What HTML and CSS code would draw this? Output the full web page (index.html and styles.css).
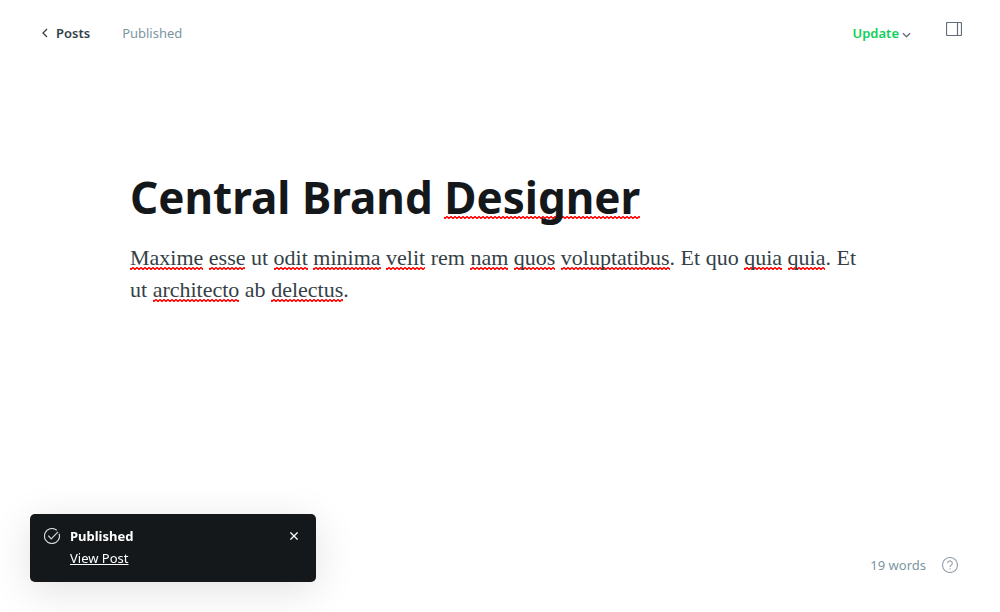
FILE: index.html
```html
<!DOCTYPE html>
<html lang="en">
<head>
<meta charset="utf-8">
<meta name="viewport" content="width=device-width, initial-scale=1">
<title>Central Brand Designer</title>
<link rel="stylesheet" href="styles.css">
</head>
<body>
<div class="editor">
  <header class="toolbar">
    <nav class="toolbar-group">
      <a class="back-link" href="#">
        <svg class="back-icon" viewBox="0 0 6 10" aria-hidden="true"><path d="M5 1 1 5l4 4"/></svg>
        <span>Posts</span>
      </a>
      <span class="status">Published</span>
    </nav>
    <div class="toolbar-group">
      <button class="update" type="button">
        <span>Update</span>
        <svg class="chevron" viewBox="0 0 10 6" aria-hidden="true"><path d="m1 1 4 4 4-4"/></svg>
      </button>
      <button class="icon-button settings" type="button" aria-label="Settings">
        <svg class="panel-icon" viewBox="0 0 16 14" aria-hidden="true"><rect x=".5" y=".5" width="15" height="13" rx="1"/><path d="M11.5 .5v13"/></svg>
      </button>
    </div>
  </header>
  <main class="canvas">
    <h1 class="title" contenteditable="true" spellcheck="false">Central Brand <span class="misspelt">Designer</span></h1>
    <p class="content" contenteditable="true" spellcheck="false"><span class="misspelt">Maxime</span> <span class="misspelt">esse</span> ut <span class="misspelt">odit</span> <span class="misspelt">minima</span> <span class="misspelt">velit</span> rem <span class="misspelt">nam</span> <span class="misspelt">quos</span> <span class="misspelt">voluptatibus</span>. Et quo <span class="misspelt">quia</span> <span class="misspelt">quia</span>. Et ut <span class="misspelt">architecto</span> ab <span class="misspelt">delectus</span>.</p>
  </main>
  <footer class="word-count">
    <span>19 words</span>
    <a class="help" href="#" aria-label="Help">
      <svg class="help-icon" viewBox="0 0 16 16" aria-hidden="true"><circle cx="8" cy="8" r="7.5"/><path d="M5.7 6.2a2.3 2.3 0 1 1 3.5 2c-.8.5-1.2.8-1.2 1.7"/><path d="M8 11.3v1.1"/></svg>
    </a>
  </footer>
</div>
<aside class="toast" role="status">
  <svg class="check-icon" viewBox="0 0 16 16" aria-hidden="true"><path d="M15.1 5.7a7.5 7.5 0 1 1-2.3-3.4"/><path d="m4.3 7.6 2.9 3.2 6.8-7"/></svg>
  <div class="toast-body">
    <strong class="toast-title">Published</strong>
    <a class="toast-link" href="#">View Post</a>
  </div>
  <button class="icon-button close" type="button" aria-label="Close">
    <svg class="close-icon" viewBox="0 0 8 8" aria-hidden="true"><path d="m.4.4 7.2 7.2M7.6.4.4 7.6"/></svg>
  </button>
</aside>
</body>
</html>
```
FILE: styles.css
```css
* {
  box-sizing: border-box;
}

body {
  margin: 0;
  background: #fff;
  color: #14181b;
  font-family: "Noto Sans", "Open Sans", sans-serif;
  font-size: 13px;
  line-height: 20px;
}

a {
  color: inherit;
  text-decoration: none;
}

button {
  padding: 0;
  border: 0;
  background: none;
  font: inherit;
  cursor: pointer;
}

svg {
  display: block;
  fill: none;
  stroke: currentColor;
}

.editor {
  display: flex;
  flex-direction: column;
  min-height: 100vh;
}

.toolbar {
  display: flex;
  justify-content: space-between;
  align-items: flex-start;
  padding: 20px 38px 0 42px;
}

.toolbar-group {
  display: flex;
  align-items: flex-start;
}

.back-link {
  display: flex;
  align-items: center;
  gap: 8px;
  margin-top: 3px;
  color: #343f47;
  font-weight: 600;
}

.back-icon {
  width: 6px;
  height: 10px;
  stroke-width: 1.3;
}

.status {
  margin: 3px 0 0 32px;
  color: #7c95a2;
}

.update {
  display: flex;
  align-items: center;
  gap: 3px;
  margin-top: 3px;
  color: #0bd05a;
  font-weight: 600;
}

.chevron {
  width: 9px;
  height: 6px;
  margin-top: 4px;
  color: #6b747c;
  stroke-width: 1.6;
}

.icon-button {
  display: flex;
}

.settings {
  margin: 2px 0 0 35px;
  color: #626d79;
}

.panel-icon {
  width: 16px;
  height: 14px;
  stroke-width: 1.2;
}

.canvas {
  flex: 1;
  width: 100%;
  max-width: 740px;
  margin: 0 auto;
  padding-top: 126px;
}

.title {
  margin: 0;
  font-size: 44px;
  font-weight: 700;
  line-height: 56px;
  outline: none;
}

.content {
  margin: 17px 0 0;
  color: #343f47;
  font-family: Georgia, "Liberation Serif", serif;
  font-size: 22px;
  line-height: 32px;
  outline: none;
}

.misspelt {
  background: url("data:image/svg+xml,%3Csvg xmlns='http://www.w3.org/2000/svg' width='4' height='3'%3E%3Cpath d='M-1 .5 1 2.5 3 .5 5 2.5' fill='none' stroke='%23f00' stroke-width='1.4'/%3E%3C/svg%3E") repeat-x left bottom;
}

.title .misspelt {
  background-position: left bottom 8px;
}

.word-count {
  display: flex;
  justify-content: flex-end;
  align-items: center;
  gap: 16px;
  padding: 0 42px 37px 0;
  color: #7c95a2;
}

.help-icon {
  width: 16px;
  height: 16px;
  color: #95a1ad;
  stroke-width: 1.1;
}

.toast {
  position: fixed;
  bottom: 30px;
  left: 30px;
  display: flex;
  align-items: flex-start;
  width: 286px;
  padding: 11px 18px 13px 14px;
  border-radius: 5px;
  background: #14181b;
  box-shadow: 0 0 1px rgba(0, 0, 0, .05), 0 8px 40px rgba(0, 0, 0, .12);
  color: #fff;
}

.check-icon {
  width: 16px;
  height: 16px;
  margin: 3px 10px 0 0;
  color: #d5d8da;
  stroke-width: 1.2;
}

.toast-body {
  display: flex;
  flex: 1;
  flex-direction: column;
  align-items: flex-start;
  line-height: 22px;
}

.toast-title {
  font-weight: 700;
}

.toast-link {
  text-decoration: underline;
}

.close {
  margin-top: 7px;
  color: #fff;
}

.close-icon {
  width: 8px;
  height: 8px;
  stroke-width: 1.3;
}
```
